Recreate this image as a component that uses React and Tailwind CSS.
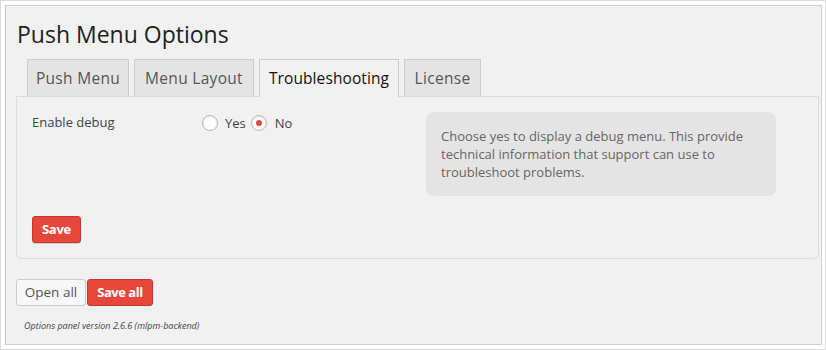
import React from "react";

function Radio({ checked }) {
  return (
    <span className="inline-flex w-[16px] h-[16px] rounded-full border border-[#b4b9be] bg-white shadow-[inset_0_1px_2px_rgba(0,0,0,0.1)] items-center justify-center">
      {checked && <span className="w-[6px] h-[6px] rounded-full bg-[#e5483b]" />}
    </span>
  );
}

export default function App() {
  const tabs = [
    { t: "Push Menu", w: "w-[102px]" },
    { t: "Menu Layout", w: "w-[120px]" },
    { t: "Troubleshooting", w: "w-[140px]" },
    { t: "License", w: "w-[77px]" },
  ];
  return (
    <div
      className="w-[826px] h-[350px] bg-white border border-[#dcdcdc] pl-[4px] pt-[4px]"
      style={{ fontFamily: '"Open Sans", "Noto Sans", sans-serif' }}
    >
      <div className="w-[817px] h-[340px] border border-[#cfcfcf] bg-[#f1f1f1] pl-[10px] pr-[2px] pt-[13px]">
        <h1 className="ml-[1px] text-[23px] leading-[30px] text-[#222]">Push Menu Options</h1>
        <div className="flex items-end gap-[5px] ml-[11px] mt-[10px] relative z-10">
          {tabs.map(({ t, w }) => {
            const active = t === "Troubleshooting";
            return (
              <div
                key={t}
                className={
                  active
                    ? `${w} h-[38px] text-center border border-b-0 border-[#ccc] bg-[#f1f1f1] text-[15.5px] tracking-[0.1px] leading-[36px] text-[#111] -mb-[1px]`
                    : `${w} h-[37px] text-center border border-b-0 border-[#ccc] bg-[#e4e4e4] text-[15.5px] tracking-[0.3px] leading-[36px] text-[#555]`
                }
              >
                {t}
              </div>
            );
          })}
        </div>
        <div className="border border-[#dcdcdc] rounded-b-[6px] pl-[15px] pt-[15px] pb-[15px]">
          <div className="flex items-start">
            <div className="w-[170px] text-[13px] leading-[18px] text-[#444] mt-[1px]">Enable debug</div>
            <div className="w-[224px] flex items-center text-[13px] leading-[18px] text-[#444] mt-[2px]">
              <Radio />
              <span className="ml-[7px] mr-[5px]">Yes</span>
              <Radio checked />
              <span className="ml-[8px]">No</span>
            </div>
            <div className="w-[350px] bg-[#e4e4e4] rounded-[8px] px-[15px] py-[15px] text-[13px] leading-[18px] text-[#666]">
              Choose yes to display a debug menu. This provide technical information that support can use to troubleshoot problems.
            </div>
          </div>
          <button className="mt-[20px] h-[27px] px-[9px] rounded-[3px] border border-[#c9352b] bg-[#e5483b] text-white text-[13px] font-bold tracking-[-0.3px] leading-[25px] shadow-[0_1px_0_rgba(0,0,0,0.15)]">
            Save
          </button>
        </div>
        <div className="flex mt-[20px]">
          <button className="w-[70px] h-[27px] rounded-[3px] border border-[#ccc] bg-[#f7f7f7] text-[#555] text-[13.5px] leading-[25px]">
            Open all
          </button>
          <button className="ml-[1px] w-[66px] h-[27px] rounded-[3px] border border-[#c9352b] bg-[#e5483b] text-white text-[13px] font-bold tracking-[-0.5px] leading-[25px]">
            Save all
          </button>
        </div>
        <p className="ml-[8px] mt-[13px] text-[9px] italic text-[#444]">Options panel version 2.6.6 (mlpm-backend)</p>
      </div>
    </div>
  );
}
